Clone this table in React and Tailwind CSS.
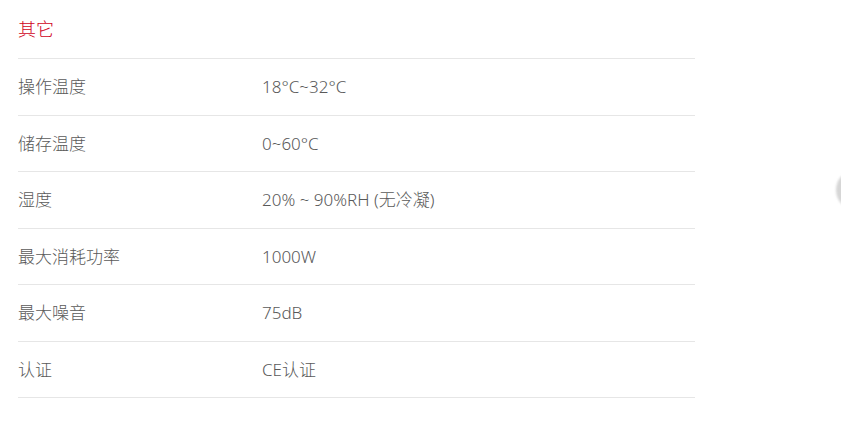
export default function App() {
  const rows = [
    ["操作温度", "18°C~32°C"],
    ["储存温度", "0~60°C"],
    ["湿度", "20% ~ 90%RH (无冷凝)"],
    ["最大消耗功率", "1000W"],
    ["最大噪音", "75dB"],
    ["认证", "CE认证"],
  ];
  return (
    <div
      className="relative w-[841px] h-[448px] overflow-hidden bg-white"
      style={{ fontFamily: '"Noto Sans", "Noto Sans CJK SC", sans-serif' }}
    >
      <div className="ml-[18px] w-[677px]">
        <div className="h-[59px] border-b border-[#e6e6e6] flex items-center text-[18px] text-[#d0021b] font-light">
          其它
        </div>
        {rows.map(([k, v]) => (
          <div
            key={k}
            className="h-[56.5px] border-b border-[#e6e6e6] flex items-center text-[17px] text-[#595959] font-light"
          >
            <div className="w-[244px]">{k}</div>
            <div>{v}</div>
          </div>
        ))}
      </div>
      <div className="absolute left-[836px] top-[170px] w-[40px] h-[40px] rounded-full bg-[#d6d6d6] blur-[1px]" />
    </div>
  );
}
